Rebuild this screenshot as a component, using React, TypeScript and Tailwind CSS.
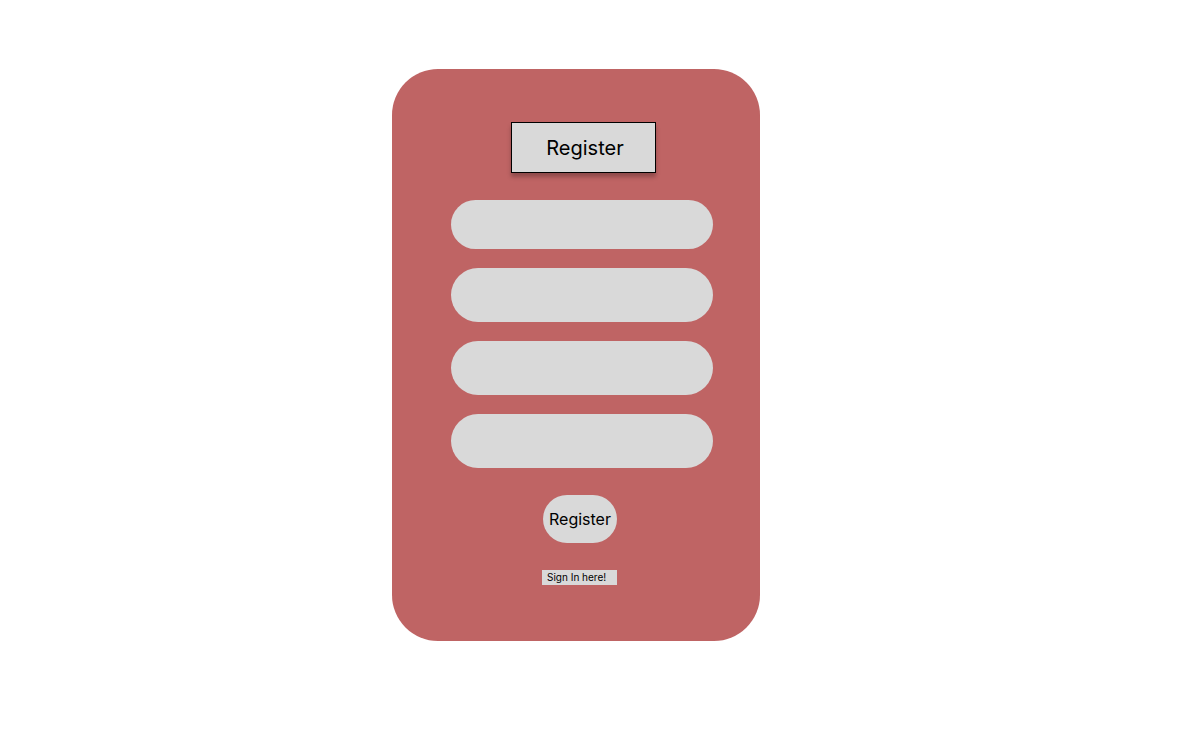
import React from "react";

const fields = [
  { name: "name", label: "Name", type: "text", height: "h-[49px]" },
  { name: "email", label: "Email", type: "email", height: "h-[54px]" },
  { name: "password", label: "Password", type: "password", height: "h-[54px]" },
  { name: "confirm", label: "Confirm password", type: "password", height: "h-[54px]" },
];

export default function App() {
  return (
    <main className="flex min-h-screen items-start justify-center bg-white pt-[69px] pr-[38px] pb-[88px] font-['Inter',sans-serif] text-black">
      <form
        className="flex w-full max-w-[368px] flex-col items-center rounded-[46px] bg-[#bf6464] pt-[53px] pr-[47px] pb-14 pl-[59px]"
        onSubmit={(e) => e.preventDefault()}
      >
        <h1 className="ml-[3px] flex h-[51px] w-[145px] items-center justify-center border border-black bg-[#d9d9d9] pl-[3px] text-xl shadow-[0_4px_4px_rgba(0,0,0,0.25)]">
          Register
        </h1>
        <div className="mt-[27px] flex w-full flex-col gap-[19px]">
          {fields.map((f) => (
            <input
              key={f.name}
              name={f.name}
              type={f.type}
              aria-label={f.label}
              className={`w-full shrink-0 rounded-full bg-[#d9d9d9] px-6 ${f.height}`}
            />
          ))}
        </div>
        <button
          type="submit"
          className="mt-[27px] mr-1 h-12 w-[74px] rounded-full bg-[#d9d9d9] text-base"
        >
          Register
        </button>
        <a
          href="#sign-in"
          className="mt-[27px] mr-[5px] h-[15px] w-[75px] bg-[#d9d9d9] pl-[5px] text-[10px] leading-[15px] whitespace-nowrap"
        >
          Sign In here!
        </a>
      </form>
    </main>
  );
}
